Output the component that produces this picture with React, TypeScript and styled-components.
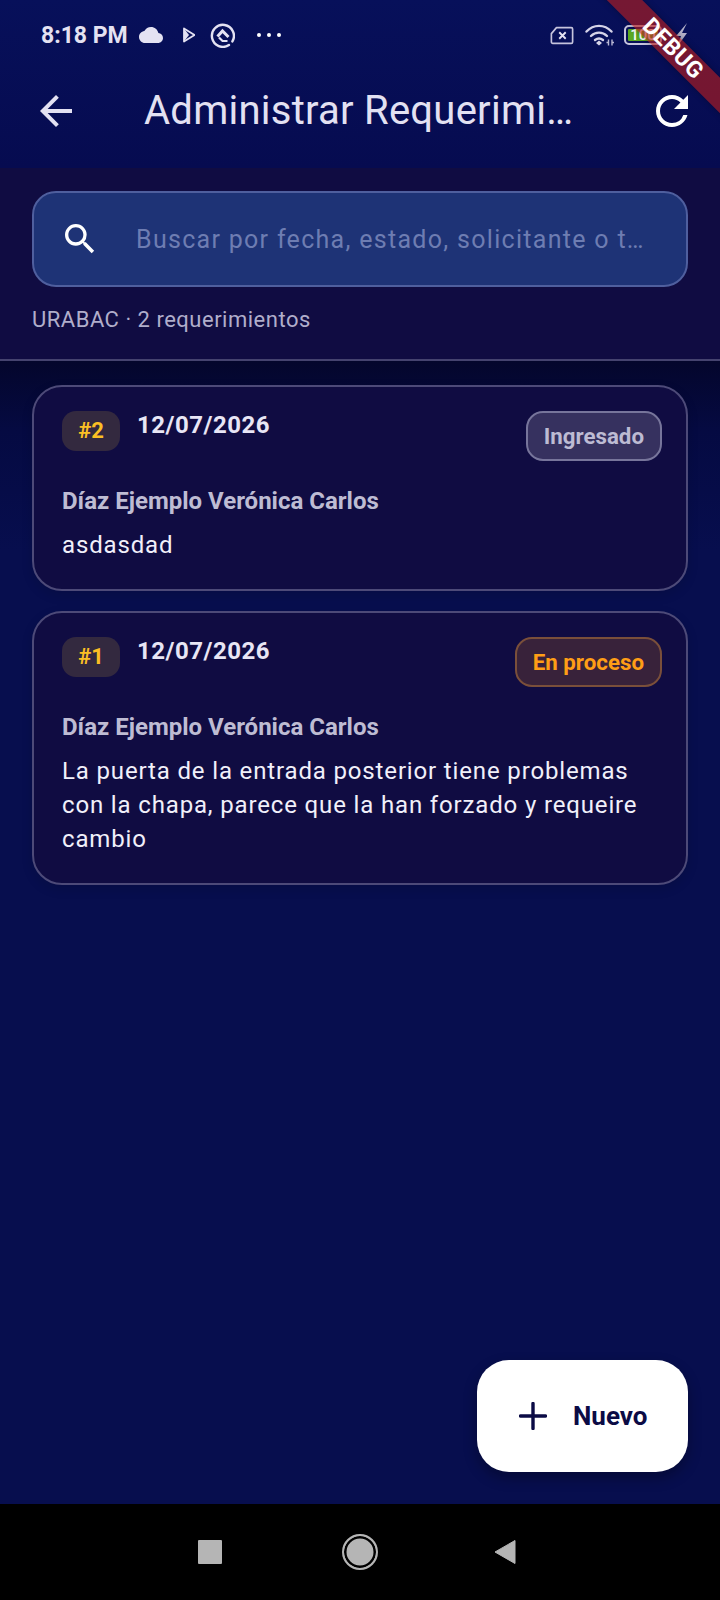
import React from 'react';
import styled, { createGlobalStyle } from 'styled-components';
import { MdArrowBack, MdRefresh, MdSearch } from 'react-icons/md';

const GlobalStyle = createGlobalStyle`
  html, body {
    margin: 0;
    padding: 0;
    background: #000;
  }
  * {
    box-sizing: border-box;
  }
`;

const STATUS_STYLES = {
  ingresado: { bg: '#36315f', border: '#77759b', color: '#bdbbd3' },
  proceso: { bg: '#38223a', border: '#7a4f3a', color: '#ff9e16' },
};

type StatusKind = keyof typeof STATUS_STYLES;

const ITEMS: { id: number; date: string; name: string; text: string; status: string; kind: StatusKind }[] = [
  {
    id: 2,
    date: '12/07/2026',
    name: 'Díaz Ejemplo Verónica Carlos',
    text: 'asdasdad',
    status: 'Ingresado',
    kind: 'ingresado',
  },
  {
    id: 1,
    date: '12/07/2026',
    name: 'Díaz Ejemplo Verónica Carlos',
    text: 'La puerta de la entrada posterior tiene problemas con la chapa, parece que la han forzado y requeire cambio',
    status: 'En proceso',
    kind: 'proceso',
  },
];

function CloudIcon() {
  return (
    <svg width='24' height='16' viewBox='0 4 24 16'>
      <path
        d='M19.35 10.04C18.67 6.59 15.64 4 12 4 9.11 4 6.6 5.64 5.35 8.04 2.34 8.36 0 10.91 0 14c0 3.31 2.69 6 6 6h13c2.76 0 5-2.24 5-5 0-2.64-2.05-4.78-4.65-4.96z'
        fill='#e4e2f2'
      />
    </svg>
  );
}

function PlayIcon() {
  return (
    <svg width='17' height='16' viewBox='-5 0 17 16'>
      <path d='M1 1.500l10.500 6.500-10.500 6.500z' fill='none' stroke='#e4e2f2' strokeWidth='1.800' strokeLinejoin='round' />
      <path d='M1 1.500l5 6.500-5 6.500z' fill='#e4e2f2' />
    </svg>
  );
}

function RingIcon() {
  return (
    <svg width='25' height='25' viewBox='0 0 25 25'>
      <path d='M19 22a11 11 0 1 1 3.400-3.600' fill='none' stroke='#e4e2f2' strokeWidth='2.400' strokeLinecap='round' />
      <path d='M7.500 13.500l5-5.500 6 6' fill='none' stroke='#e4e2f2' strokeWidth='3' />
      <path d='M9 14.500l3.500 3.500h5' fill='none' stroke='#e4e2f2' strokeWidth='2.200' />
    </svg>
  );
}

function SimIcon() {
  return (
    <svg width='24' height='19' viewBox='0 0 26 20'>
      <path
        d='M7 1.500h16a1.500 1.500 0 0 1 1.500 1.500v14a1.500 1.500 0 0 1-1.500 1.500H3a1.500 1.500 0 0 1-1.500-1.500V8z'
        fill='none'
        stroke='#c6c4dd'
        strokeWidth='1.800'
        strokeLinejoin='round'
      />
      <path d='M10 6.500l7 7m0-7l-7 7' stroke='#e4e2f2' strokeWidth='2' />
    </svg>
  );
}

function WifiIcon() {
  return (
    <svg width='30' height='24' viewBox='0 0 30 24'>
      <g fill='none' stroke='#d5d3e8' strokeWidth='2.400' strokeLinecap='round'>
        <path d='M1.500 8.500c7-7.500 18-7.500 25 0' />
        <path d='M6 13c4.500-4.500 11.500-4.500 16 0' />
        <path d='M10 17c2.500-2 5.500-2 8 0' />
      </g>
      <path d='M14 17.500l3 2.500-3 2.500-3-2.500z' fill='#d5d3e8' />
      <path d='M23.500 16.500v6M27 16.500v6M21.500 19.500h2M27 19.500h2' stroke='#b9b7d4' strokeWidth='1.400' />
    </svg>
  );
}

function BoltIcon() {
  return (
    <svg width='14' height='26' viewBox='0 0 14 24'>
      <path d='M13 0L2 13h5L3 24l10-14H8z' fill='#b3b1c9' />
    </svg>
  );
}

function PlusIcon() {
  return (
    <svg width='28' height='28' viewBox='0 0 28 28'>
      <path d='M14 1.500v25M1.500 14h25' stroke='#0b0b45' strokeWidth='3.400' strokeLinecap='round' />
    </svg>
  );
}

export default function App() {
  return (
    <S.Page>
      <GlobalStyle />
      <S.Top>
        <S.StatusBar>
          <S.Time>8:18 PM</S.Time>
          <S.StatusLeft>
            <CloudIcon />
            <PlayIcon />
            <RingIcon />
            <S.Dots>
              <i />
              <i />
              <i />
            </S.Dots>
          </S.StatusLeft>
          <S.StatusRight>
            <SimIcon />
            <WifiIcon />
            <S.Battery>
              <S.BatteryFill>100</S.BatteryFill>
            </S.Battery>
            <BoltIcon />
          </S.StatusRight>
        </S.StatusBar>
        <S.AppBar>
          <S.BarIcon>
            <MdArrowBack size={48} />
          </S.BarIcon>
          <S.Title>Administrar Requerimi…</S.Title>
          <S.BarIcon>
            <MdRefresh size={48} color='#fff' />
          </S.BarIcon>
        </S.AppBar>
      </S.Top>

      <S.SearchPanel>
        <S.SearchBox>
          <MdSearch size={40} color='#fff' />
          <S.Placeholder>Buscar por fecha, estado, solicitante o t…</S.Placeholder>
        </S.SearchBox>
        <S.Count>URABAC · 2 requerimientos</S.Count>
      </S.SearchPanel>

      <S.Main>
        {ITEMS.map((item) => (
          <S.Card key={item.id}>
            <S.CardHead>
              <S.IdBadge>#{item.id}</S.IdBadge>
              <S.Date>{item.date}</S.Date>
              <S.StatusChip $kind={item.kind}>{item.status}</S.StatusChip>
            </S.CardHead>
            <S.Name>{item.name}</S.Name>
            <S.Body>{item.text}</S.Body>
          </S.Card>
        ))}
        <S.Fab>
          <PlusIcon />
          <span>Nuevo</span>
        </S.Fab>
      </S.Main>

      <S.NavBar>
        <S.NavSquare />
        <S.NavCircle />
        <S.NavBack width='24' height='26' viewBox='0 0 24 26'>
          <path d='M22 1.500v23L2 13z' fill='#b5b5b5' stroke='#b5b5b5' strokeWidth='1' strokeLinejoin='round' />
        </S.NavBack>
      </S.NavBar>

      <S.DebugBanner>DEBUG</S.DebugBanner>
    </S.Page>
  );
}

const S = {
  Page: styled.div`
    position: relative;
    width: 720px;
    height: 1600px;
    overflow: hidden;
    display: flex;
    flex-direction: column;
    background: #070e4e;
    font-family: Roboto, 'Liberation Sans', sans-serif;
  `,
  Top: styled.header`
    height: 168px;
    background: linear-gradient(180deg, #07105a 0%, #060b50 100%);
    display: flex;
    flex-direction: column;
  `,
  StatusBar: styled.div`
    height: 68px;
    padding: 2px 32px 0 41px;
    display: flex;
    align-items: center;
    color: #e4e2f2;
  `,
  Time: styled.span`
    font-size: 23px;
    font-weight: 700;
    margin-right: 11px;
  `,
  StatusLeft: styled.div`
    display: flex;
    align-items: center;
    gap: 15px;
  `,
  Dots: styled.div`
    display: flex;
    gap: 6px;
    margin-left: 7px;
    i {
      display: block;
      width: 4px;
      height: 4px;
      background: #fff;
      border-radius: 50%;
    }
  `,
  StatusRight: styled.div`
    margin-left: auto;
    display: flex;
    align-items: center;
    gap: 9px;
    svg:first-child {
      margin-right: 2px;
    }
    svg:last-child {
      margin-left: 3px;
    }
  `,
  Battery: styled.div`
    width: 38px;
    height: 20px;
    border: 2px solid #c6c4dd;
    border-radius: 5px;
    padding: 2px;
    display: flex;
  `,
  BatteryFill: styled.div`
    flex: 1;
    background: #5aa821;
    color: #fff;
    font-size: 15px;
    font-weight: 500;
    line-height: 12px;
    text-align: center;
    border-radius: 1px;
  `,
  AppBar: styled.div`
    flex: 1;
    display: flex;
    align-items: center;
    padding: 0 24px 15px 32px;
    color: #e3e1f2;
  `,
  BarIcon: styled.div`
    width: 48px;
    height: 48px;
    flex: none;
  `,
  Title: styled.h1`
    margin: 0 auto 0 64px;
    font-size: 40px;
    font-weight: 400;
    letter-spacing: 0.25px;
    white-space: nowrap;
  `,
  SearchPanel: styled.section`
    height: 193px;
    padding: 23px 32px 0;
    background: #100c42;
    border-bottom: 2px solid #45436f;
  `,
  SearchBox: styled.div`
    height: 96px;
    padding: 0 32px 0 26px;
    display: flex;
    align-items: center;
    gap: 36px;
    background: #1e3376;
    border: 2px solid #4f5f9e;
    border-radius: 24px;
    svg {
      flex: none;
    }
  `,
  Placeholder: styled.span`
    font-size: 25px;
    letter-spacing: 1.3px;
    color: #6e7db2;
    white-space: nowrap;
  `,
  Count: styled.p`
    margin: 20px 0 0;
    font-size: 22px;
    letter-spacing: 0.5px;
    line-height: 26px;
    color: #b0aecb;
  `,
  Main: styled.main`
    position: relative;
    flex: 1;
    padding: 24px 32px 0;
    display: flex;
    flex-direction: column;
    align-items: stretch;
    gap: 20px;
    background: linear-gradient(180deg, #04062c 0, #050a42 70px, #070e4e 190px);
  `,
  Card: styled.article`
    padding: 24px 24px 27px 28px;
    background: #100c42;
    border: 2px solid #4d4a78;
    border-radius: 30px;
    box-shadow: 0 4px 12px rgba(0, 0, 0, 0.12);
  `,
  CardHead: styled.div`
    display: flex;
    align-items: flex-start;
  `,
  IdBadge: styled.span`
    width: 58px;
    height: 40px;
    margin-right: 17px;
    border-radius: 14px;
    background: #33293f;
    color: #fbbf24;
    font-size: 22px;
    font-weight: 700;
    line-height: 40px;
    text-align: center;
  `,
  Date: styled.span`
    font-size: 24px;
    font-weight: 700;
    letter-spacing: 0.5px;
    line-height: 28px;
    color: #e8e6f5;
  `,
  StatusChip: styled.span<{ $kind: StatusKind }>`
    margin-left: auto;
    height: 50px;
    padding: 0 16px;
    border-radius: 17px;
    border: 2px solid ${({ $kind }) => STATUS_STYLES[$kind].border};
    background: ${({ $kind }) => STATUS_STYLES[$kind].bg};
    color: ${({ $kind }) => STATUS_STYLES[$kind].color};
    font-size: 22.3px;
    font-weight: 700;
    line-height: 46px;
  `,
  Name: styled.div`
    margin-top: 25px;
    font-size: 24px;
    font-weight: 700;
    line-height: 30px;
    color: #bebcd3;
  `,
  Body: styled.p`
    margin: 12px 0 0;
    font-size: 24px;
    letter-spacing: 0.85px;
    line-height: 34px;
    color: #f1f0fa;
  `,
  Fab: styled.button`
    position: absolute;
    right: 32px;
    bottom: 32px;
    width: 211px;
    height: 112px;
    padding: 0 0 0 42px;
    display: flex;
    align-items: center;
    gap: 26px;
    border: 0;
    border-radius: 32px;
    background: #fff;
    color: #0b0b45;
    font-family: inherit;
    font-size: 26px;
    font-weight: 700;
    box-shadow: 0 6px 14px rgba(0, 0, 0, 0.3);
  `,
  NavBar: styled.nav`
    height: 96px;
    flex: none;
    background: #000;
    display: flex;
    align-items: center;
    justify-content: center;
    gap: 120px;
  `,
  NavSquare: styled.span`
    width: 24px;
    height: 24px;
    border-radius: 1px;
    background: #b5b5b5;
  `,
  NavCircle: styled.span`
    width: 36px;
    height: 36px;
    border-radius: 50%;
    border: 2px solid #b5b5b5;
    background: #b5b5b5;
    box-shadow: inset 0 0 0 2.500px #000;
  `,
  NavBack: styled.svg`
    margin: 0 5px 0 -5px;
  `,
  DebugBanner: styled.div`
    position: absolute;
    left: 563px;
    top: 36px;
    width: 220px;
    height: 25px;
    transform: rotate(45deg);
    background: rgba(183, 28, 28, 0.627);
    box-shadow: 0 0 6px rgba(0, 0, 0, 0.3);
    color: #fff;
    font-size: 23px;
    font-weight: 700;
    letter-spacing: 0.3px;
    line-height: 25px;
    text-align: center;
  `,
};
